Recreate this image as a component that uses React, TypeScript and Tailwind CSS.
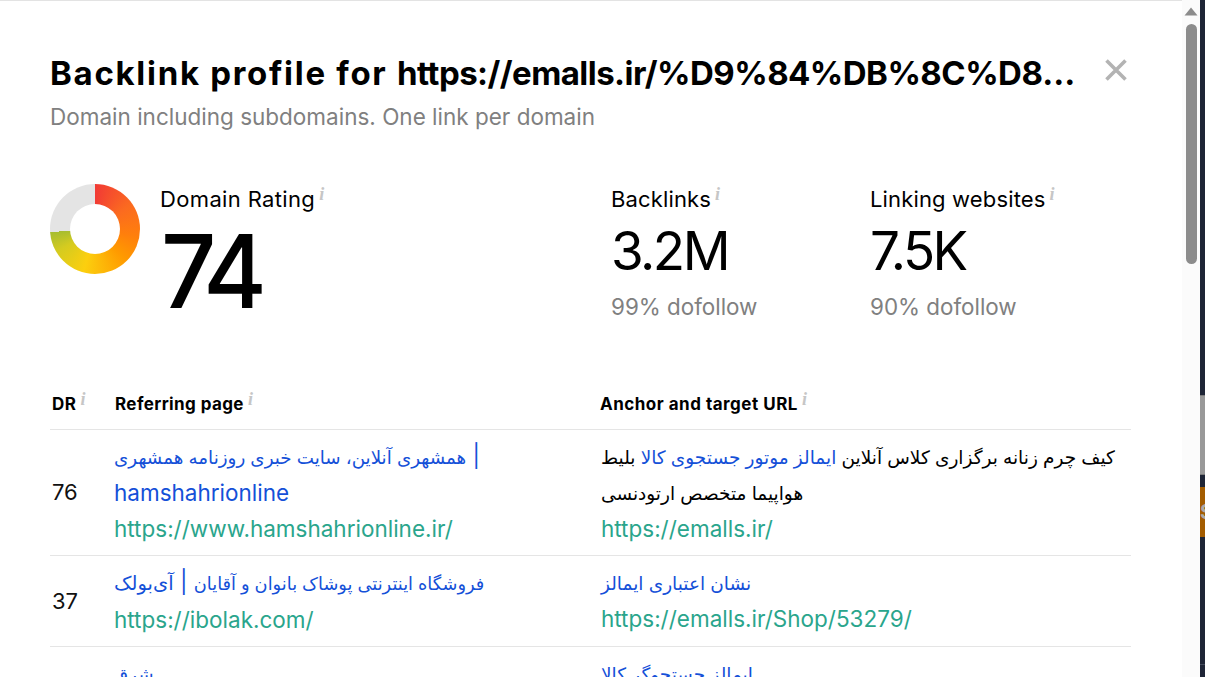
const sans = "font-['Inter','DejaVu_Sans',sans-serif]";

function Info() {
  return (
    <span className="ml-[4px] inline-block align-top font-['Liberation_Serif',serif] text-[18px] leading-[15px] font-bold tracking-normal text-[#c6c6c6] italic">i</span>
  );
}

function Fa({ children, size = "text-[18.3px]" }: { children: React.ReactNode; size?: string }) {
  return <span className={size}>{children}</span>;
}

function Stat({ label, value, sub, w }: { label: string; value: string; sub: string; w: string }) {
  return (
    <div className={`${w} pt-[3px]`}>
      <div className="h-[24px] text-[22px] leading-[24px] tracking-[0.15px] text-black">
        {label}
        <Info />
      </div>
      <div className="mt-[17px] h-[46px] text-[53px] leading-[46px] tracking-[-2.5px] text-black">{value}</div>
      <div className="mt-[20px] text-[22.4px] leading-[26px] text-[#808080]">{sub}</div>
    </div>
  );
}

function Link({ children }: { children: React.ReactNode }) {
  return <span className="text-[#1450d8]">{children}</span>;
}

function Row({ dr, page, url, anchor, target, h }: { dr?: string; page: React.ReactNode; url?: string; anchor: React.ReactNode; target?: string; h: string }) {
  return (
    <div className={`flex border-b border-[#e5e5e5] ${h}`}>
      <div className="flex w-[63px] items-center pl-[2px] text-[22px] text-[#111]">{dr}</div>
      <div className="w-[487px] pt-[8px] pr-[8px] pl-[1px]">
        <div className="text-[22.5px] leading-[36px] text-[#1450d8]">{page}</div>
        <div className="text-[22.5px] leading-[36px] text-[#2aa58c]">{url}</div>
      </div>
      <div className="flex-1 pt-[9px] pr-[14px] pl-[1px]">
        <div className="text-[18.5px] leading-[36px] text-black">{anchor}</div>
        <div className="text-[22.5px] leading-[36px] text-[#2aa58c]">{target}</div>
      </div>
    </div>
  );
}

export default function App() {
  return (
    <div className={`flex h-[677px] w-[1205px] overflow-hidden bg-white ${sans}`}>
      <main className="h-full w-[1182px] shrink-0 border-t border-[#e3e3e3] pt-[47px] pr-[51px] pl-[50px]">
        <header className="flex items-start">
          <h1 className="w-[1027px] truncate text-[33px] leading-[50px] font-bold tracking-[-0.55px] text-black">
            <span className="tracking-[1.7px]">Backlink profile for </span>
            https://emalls.ir/%D9%84%DB%8C%D8%B3%D8%AA-%D9%82%DB%8C%D9%85%D8%AA
          </h1>
          <svg className="mt-[9px] ml-[26px] shrink-0" width="26" height="26" viewBox="0 0 26 26">
            <path d="M3.5 3.5 L22.5 22.5 M22.5 3.5 L3.5 22.5" stroke="#b3b3b3" strokeWidth="3.6" />
          </svg>
        </header>
        <p className="mt-[4px] text-[22.5px] leading-[30px] text-[#808080]">Domain including subdomains. One link per domain</p>

        <section className="mt-[52px] flex">
          <div className="relative h-[90px] w-[90px] shrink-0 rounded-full bg-[conic-gradient(#f13a35_0deg,#fb6a20_55deg,#ff7f0c_100deg,#ff9a00_135deg,#fccf0e_195deg,#d4cb20_240deg,#a7bd30_266deg,#e4e4e4_266deg,#e4e4e4_360deg)]">
            <div className="absolute inset-[20px] rounded-full bg-white" />
          </div>
          <div className="ml-[20px] w-[451px] pt-[3px]">
            <div className="h-[24px] text-[22px] leading-[24px] tracking-[0.35px] text-black">
              Domain Rating
              <Info />
            </div>
            <div className="mt-[11px] ml-[1px] origin-left scale-x-[0.95] text-[102px] leading-[98px] font-medium tracking-[-8px] text-black">74</div>
          </div>
          <Stat label="Backlinks" value="3.2M" sub="99% dofollow" w="w-[259px]" />
          <Stat label="Linking websites" value="7.5K" sub="90% dofollow" w="w-[260px]" />
        </section>

        <section className="mt-[72px]">
          <div className="flex border-b border-[#e5e5e5] pb-[13px] text-[17px] leading-[24px] font-bold tracking-[0.5px] text-black">
            <div className="w-[63px] pl-[2px]">
              DR
              <Info />
            </div>
            <div className="w-[487px] pl-[2px] tracking-[0.4px]">
              Referring page
              <Info />
            </div>
            <div className="flex-1">
              Anchor and target URL
              <Info />
            </div>
          </div>
          <Row
            h="h-[126px]"
            dr="76"
            page={
              <>
                <Fa>همشهری آنلاین، سایت خبری روزنامه همشهری</Fa> | hamshahrionline
              </>
            }
            url="https://www.hamshahrionline.ir/"
            anchor={
              <>
                کیف چرم زنانه برگزاری کلاس آنلاین <Link>ایمالز موتور جستجوی کالا</Link> بلیط هواپیما متخصص ارتودنسی
              </>
            }
            target="https://emalls.ir/"
          />
          <Row
            h="h-[91px]"
            dr="37"
            page={
              <>
                <Fa size="text-[17.8px]">فروشگاه اینترنتی پوشاک بانوان و آقایان</Fa> | <Fa size="text-[19.5px]">آی‌بولک</Fa>
              </>
            }
            url="https://ibolak.com/"
            anchor={<Link>نشان اعتباری ایمالز</Link>}
            target="https://emalls.ir/Shop/53279/"
          />
          <Row h="h-[91px]" page={<Fa>شرق</Fa>} anchor={<Link>ایمالز جستجوگر کالا</Link>} />
        </section>
      </main>

      <aside className="flex h-full w-[18px] shrink-0 flex-col items-center bg-[#fbfbfb]">
        <svg className="mt-[7px] shrink-0" width="14" height="9" viewBox="0 0 14 9">
          <path d="M7 0.5 L13.5 8.5 L0.5 8.5 Z" fill="#8c8c8c" />
        </svg>
        <div className="mt-[8px] h-[240px] w-[11px] rounded-[6px] bg-[#8c8c8c]" />
      </aside>

      <div className="flex h-full w-[5px] shrink-0 flex-col bg-[#1e2536]">
        <div className="mt-[395px] h-[80px] border-y border-[#7a7a7a] bg-[#999]" />
        <div className="mt-[12px] h-[50px] overflow-hidden bg-[#a35c00] text-[20px] leading-[50px] font-bold text-[#aaa]">S</div>
        <div className="mt-[127px] h-px bg-[#444c5c]" />
      </div>
    </div>
  );
}
